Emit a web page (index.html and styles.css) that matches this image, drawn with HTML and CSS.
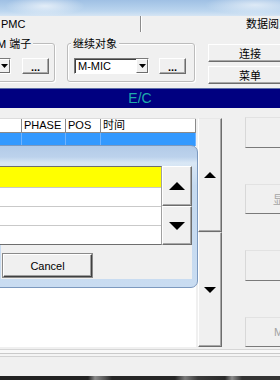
FILE: index.html
```html
<!DOCTYPE html>
<html lang="zh-CN">
<head>
  <meta charset="UTF-8" />
  <title>PMC – E/C</title>
  <meta name="viewport" content="width=device-width, initial-scale=1.0" />
  <link rel="stylesheet" href="styles.css">
</head>
<body>
  <div class="titlebar"></div>

  <!-- status line -->
  <div class="status">
    <div class="pane pane-mode">PMC</div>
    <div class="pane pane-info">数据阅览</div>
  </div>

  <!-- selector toolbar -->
  <div class="toolbar">
    <div class="group group-m">
      <span class="legend">M 端子</span>
      <div class="combo combo-m">
        <span class="combo-text"></span>
        <span class="combo-btn"><svg width="7" height="4" viewBox="0 0 7 4"><polygon points="0,0 7,0 3.5,4" /></svg></span>
      </div>
      <button class="btn3d btn-dots">...</button>
    </div>

    <div class="group group-target">
      <span class="legend">继续对象</span>
      <div class="combo combo-target">
        <span class="combo-text">M-MIC</span>
        <span class="combo-btn"><svg width="7" height="4" viewBox="0 0 7 4"><polygon points="0,0 7,0 3.5,4" /></svg></span>
      </div>
      <button class="btn3d btn-dots">...</button>
    </div>

    <div class="actions">
      <button class="btn3d">连接</button>
      <button class="btn3d">菜单</button>
    </div>
  </div>

  <div class="band">E/C</div>

  <div class="main">
    <!-- list view -->
    <div class="list">
      <div class="list-head">
        <span class="cell c0"></span>
        <span class="cell c1">PHASE</span>
        <span class="cell c2">POS</span>
        <span class="cell c3">时间</span>
      </div>
      <div class="list-row selected">
        <span class="cell c0"></span>
        <span class="cell c1"></span>
        <span class="cell c2"></span>
        <span class="cell c3"></span>
      </div>

      <!-- pick dialog -->
      <div class="dialog">
        <div class="dlg-body">
          <div class="dlg-top">
            <div class="pick-list">
              <div class="pick-row active"></div>
              <div class="pick-row"></div>
              <div class="pick-row"></div>
              <div class="pick-row"></div>
            </div>
            <div class="pick-arrows">
              <button class="btn3d pick-btn"><svg width="16" height="8" viewBox="0 0 16 8"><polygon points="0,8 16,8 8,0" /></svg></button>
              <button class="btn3d pick-btn"><svg width="16" height="8" viewBox="0 0 16 8"><polygon points="0,0 16,0 8,8" /></svg></button>
            </div>
          </div>
          <button class="btn3d btn-cancel">Cancel</button>
        </div>
      </div>
    </div>

    <div class="scroller">
      <button class="btn3d scroll-btn"><svg width="12" height="6" viewBox="0 0 12 6"><polygon points="0,6 12,6 6,0" /></svg></button>
      <button class="btn3d scroll-btn"><svg width="12" height="6" viewBox="0 0 12 6"><polygon points="0,0 12,0 6,6" /></svg></button>
    </div>

    <div class="side">
      <button class="btn3d side-btn"></button>
      <button class="btn3d side-btn off">显示</button>
      <button class="btn3d side-btn"></button>
      <button class="btn3d side-btn off">MDI</button>
    </div>
  </div>

  <div class="footer"></div>
  <div class="taskbar"></div>
</body>
</html>
```

FILE: styles.css
```css
* { box-sizing: border-box; }
html, body { margin: 0; }
body {
  width: 280px; height: 380px; overflow: hidden;
  background: #f0f0f0; color: #000;
  font: 11px "Liberation Sans", "Noto Sans CJK SC", sans-serif;
}
button { font: inherit; color: inherit; margin: 0; padding: 0; background: #f0f0f0; }
svg polygon { fill: #000; }

/* classic raised button */
.btn3d {
  border: 1px solid; border-color: #fff #6d6d6d #6d6d6d #fff;
  box-shadow: inset -1px -1px #a8a8a8;
  display: flex; align-items: center; justify-content: center;
}

.titlebar {
  height: 16px;
  background:
    radial-gradient(ellipse 40px 10px at 45px 6px, rgba(255,255,255,.65), transparent),
    radial-gradient(ellipse 50px 10px at 255px 5px, rgba(255,255,255,.6), transparent),
    linear-gradient(#9fc0e4, #bcd6ef 70%, #d6e5f4);
}

/* status line */
.status { display: flex; height: 16px; }
.pane { line-height: 16px; white-space: nowrap; overflow: hidden; }
.pane-mode { flex: none; width: 141px; border-right: 1px solid #8c8c8c; padding-left: 1px; }
.pane-info { flex: 1; border-left: 1px solid #fff; padding-left: 104px; }

/* toolbar */
.toolbar { display: flex; align-items: flex-start; height: 56px; }
.group {
  position: relative; flex: none; display: flex; align-items: flex-start;
  height: 39px; margin-top: 11px; padding: 14px 0 0 6px;
  border: 1px solid #bcbcbc; border-radius: 3px;
  box-shadow: inset 1px 1px #fff, 1px 1px #fff;
}
.group-m { width: 95px; margin-left: -40px; gap: 11px; }
.group-target { width: 128px; margin-left: 12px; gap: 10px; }
.legend {
  position: absolute; top: -6px; left: 3px;
  padding: 0 2px; background: #f0f0f0; line-height: 12px; white-space: nowrap;
}
.group-m .legend { left: 34px; }

.combo {
  display: flex; height: 16px; background: #fff;
  border: 1px solid; border-color: #7a7a7a #fff #fff #7a7a7a;
  box-shadow: inset 1px 1px #404040;
}
.combo-m { width: 44px; }
.combo-target { width: 75px; }
.combo-text { flex: 1; padding: 1px 0 0 3px; line-height: 13px; }
.combo-btn {
  width: 12px; display: flex; align-items: center; justify-content: center;
  background: #f0f0f0; border: 1px solid; border-color: #fff #6d6d6d #6d6d6d #fff;
}
.btn-dots { width: 27px; height: 16px; font-weight: bold; padding-top: 1px; }

.actions { flex: none; width: 84px; margin: 12px 0 0 13px; display: flex; flex-direction: column; gap: 4px; }
.actions .btn3d { height: 18px; }

.band {
  height: 20px; background: #000080; color: #1faaaa;
  border-top: 1px solid #5d6ea8;
  text-align: center; font-size: 14px; line-height: 19px;
}

/* list, scroller and side buttons */
.main { display: flex; height: 239px; padding-top: 10px; }
.list { position: relative; flex: none; width: 196px; background: #fff; }
.list-head, .list-row { display: flex; }
.list-head { height: 15px; border-top: 1px solid #dcdcdc; }
.list-head .cell {
  border-right: 1px solid #8a8a8a; border-bottom: 1px solid #8a8a8a;
  padding-left: 2px; line-height: 13px; font-size: 11px;
}
.c0 { width: 22px; }
.c1 { width: 44px; }
.c2 { width: 35px; }
.c3 { flex: 1; }
.list-row { height: 13px; }
.list-row.selected { background: #3399ff; }
.list-row .cell { border-right: 1px solid #6fb3ff; }

.dialog {
  position: absolute; left: -8px; top: 27px; width: 206px; height: 143px;
  padding: 20px 5px 8px 8px;
  border: 1px solid #7c99bf; border-radius: 0 7px 7px 0;
  background: linear-gradient(#b3cbe8, #bcd2ec 11px, #d9e7f5 17px, #c5daf0 40px, #c9dcf1);
}
.dlg-body { height: 100%; background: #f0f0f0; }
.dlg-top { display: flex; height: 79px; }
.pick-list {
  flex: 1; margin-left: -4px; overflow: hidden; background: #fff;
  border: 1px solid #6e6e6e; border-right-color: #a0a0a0;
}
.pick-row { height: 19px; border-bottom: 1px solid #c9c9c9; }
.pick-row.active { height: 21px; background: #ffff00; }
.pick-arrows { width: 30px; display: flex; flex-direction: column; }
.pick-btn { height: 40px; }
.pick-btn + .pick-btn { height: 39px; }
.btn-cancel {
  width: 89px; height: 23px; margin: 9px 0 0 2px;
  border-color: #fff #404040 #404040 #fff;
  box-shadow: 0 0 0 1px #8a8a8a, inset -1px -1px #a0a0a0;
}

.scroller { flex: none; width: 24px; margin-left: 2px; display: flex; flex-direction: column; }
.scroll-btn { height: 114px; border-top-color: #e8e8e8; }
.scroll-btn + .scroll-btn { height: 115px; }

.side { flex: none; width: 78px; margin: -1px 0 0 23px; display: flex; flex-direction: column; gap: 36px; }
.side-btn { height: 31px; border-color: #e2e2e2 #7a7a7a #7a7a7a #d8d8d8; box-shadow: none; }
.side-btn.off { color: #a3a3a3; }

.footer {
  height: 29px;
  background: linear-gradient(#f0f0f0 0 2px, #d6d6d6 2px 3px, #f8f8f8 3px 6px, #cacaca 6px 7px, #f4f4f4 7px 9px, #d2d2d2 9px 10px, #f0f0f0 10px);
}
.taskbar {
  height: 4px;
  background: linear-gradient(90deg, #222 0 88px, #8a8a8a 95px, #555 105px, #262626 112px 175px, #7a7a7a 185px, #3a3a3a 198px, #2a2a2a 225px, #8c8c8c 232px, #333 242px);
}
```
